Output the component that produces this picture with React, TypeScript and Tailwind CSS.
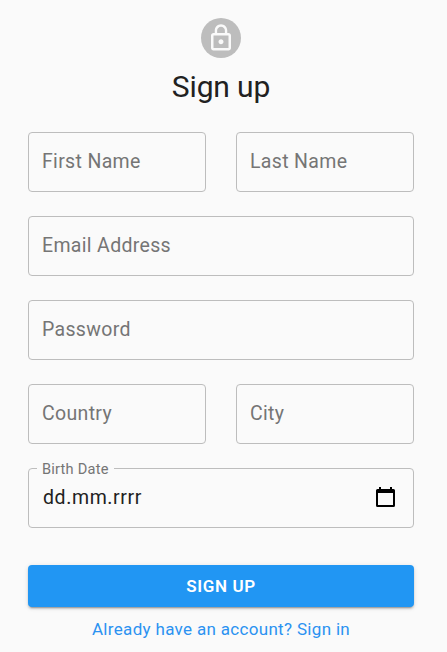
import React from "react";

function Field({ label }: { label: string }) {
  return (
    <div className="flex h-[60px] min-w-0 flex-1 items-center rounded-[4px] border border-[#bdbdbd] pl-[13px] text-[19.5px] tracking-[0.33px] text-[#757575]">
      {label}
    </div>
  );
}

export default function App() {
  return (
    <main className="h-[652px] w-[447px] overflow-hidden bg-[#fafafa] pt-[18px] pr-[33px] pl-[28px] font-['Roboto',sans-serif]">
      <header className="flex flex-col items-center">
        <div className="flex size-10 items-center justify-center rounded-full bg-[#bdbdbd] text-[#fafafa]">
          <svg width="30" height="30" viewBox="0 0 24 24" fill="currentColor">
            <path d="M12 17c1.100 0 2-.9 2-2s-.9-2-2-2-2 .9-2 2 .9 2 2 2zm6-9h-1V6c0-2.760-2.240-5-5-5S7 3.240 7 6v2H6c-1.100 0-2 .9-2 2v10c0 1.100.9 2 2 2h12c1.100 0 2-.9 2-2V10c0-1.100-.9-2-2-2zM8.900 6c0-1.710 1.390-3.100 3.100-3.100s3.100 1.390 3.100 3.100v2H8.900V6zM18 20H6V10h12v10z" />
          </svg>
        </div>
        <h1 className="mt-[9px] text-[30px] leading-[40px] tracking-[-0.15px] text-[#212121]">Sign up</h1>
      </header>
      <form className="mt-[25px] flex flex-col gap-6">
        <div className="flex gap-[30px]"><Field label="First Name" /><Field label="Last Name" /></div>
        <div className="flex"><Field label="Email Address" /></div>
        <div className="flex"><Field label="Password" /></div>
        <div className="flex gap-[30px]"><Field label="Country" /><Field label="City" /></div>
        <div className="relative flex h-[60px] items-center justify-between rounded-[4px] border border-[#bdbdbd] pr-[18px] pl-[14px] text-[#212121]">
          <span className="absolute -top-[9px] left-2 bg-[#fafafa] px-[5px] text-[14.6px] leading-[18px] tracking-[0.22px] text-[#757575]">Birth Date</span>
          <span className="text-[19.5px] tracking-[0.6px]">dd.mm.rrrr</span>
          <svg className="mb-[2px]" width="19" height="20" viewBox="0 0 19 20">
            <path d="M3 0h2v2h9V0h2v2h1.500A1.500 1.500 0 0 1 19 3.500v15a1.500 1.500 0 0 1-1.500 1.500h-16A1.500 1.500 0 0 1 0 18.500v-15A1.500 1.500 0 0 1 1.500 2H3V0zM2 6V18h15V6H2z" fill="#000" fillRule="evenodd" />
          </svg>
        </div>
      </form>
      <button className="mt-[37px] block h-[42px] w-full rounded-[4px] bg-[#2196f3] pt-[2px] text-[17px] font-semibold tracking-[0.6px] text-white shadow-[0_3px_1px_-2px_rgba(0,0,0,0.2),0_2px_2px_rgba(0,0,0,0.14),0_1px_5px_rgba(0,0,0,0.12)]">SIGN UP</button>
      <a className="mt-[11px] block text-center text-[17px] leading-[22px] tracking-[0.32px] text-[#2b92f1]">Already have an account? Sign in</a>
    </main>
  );
}
